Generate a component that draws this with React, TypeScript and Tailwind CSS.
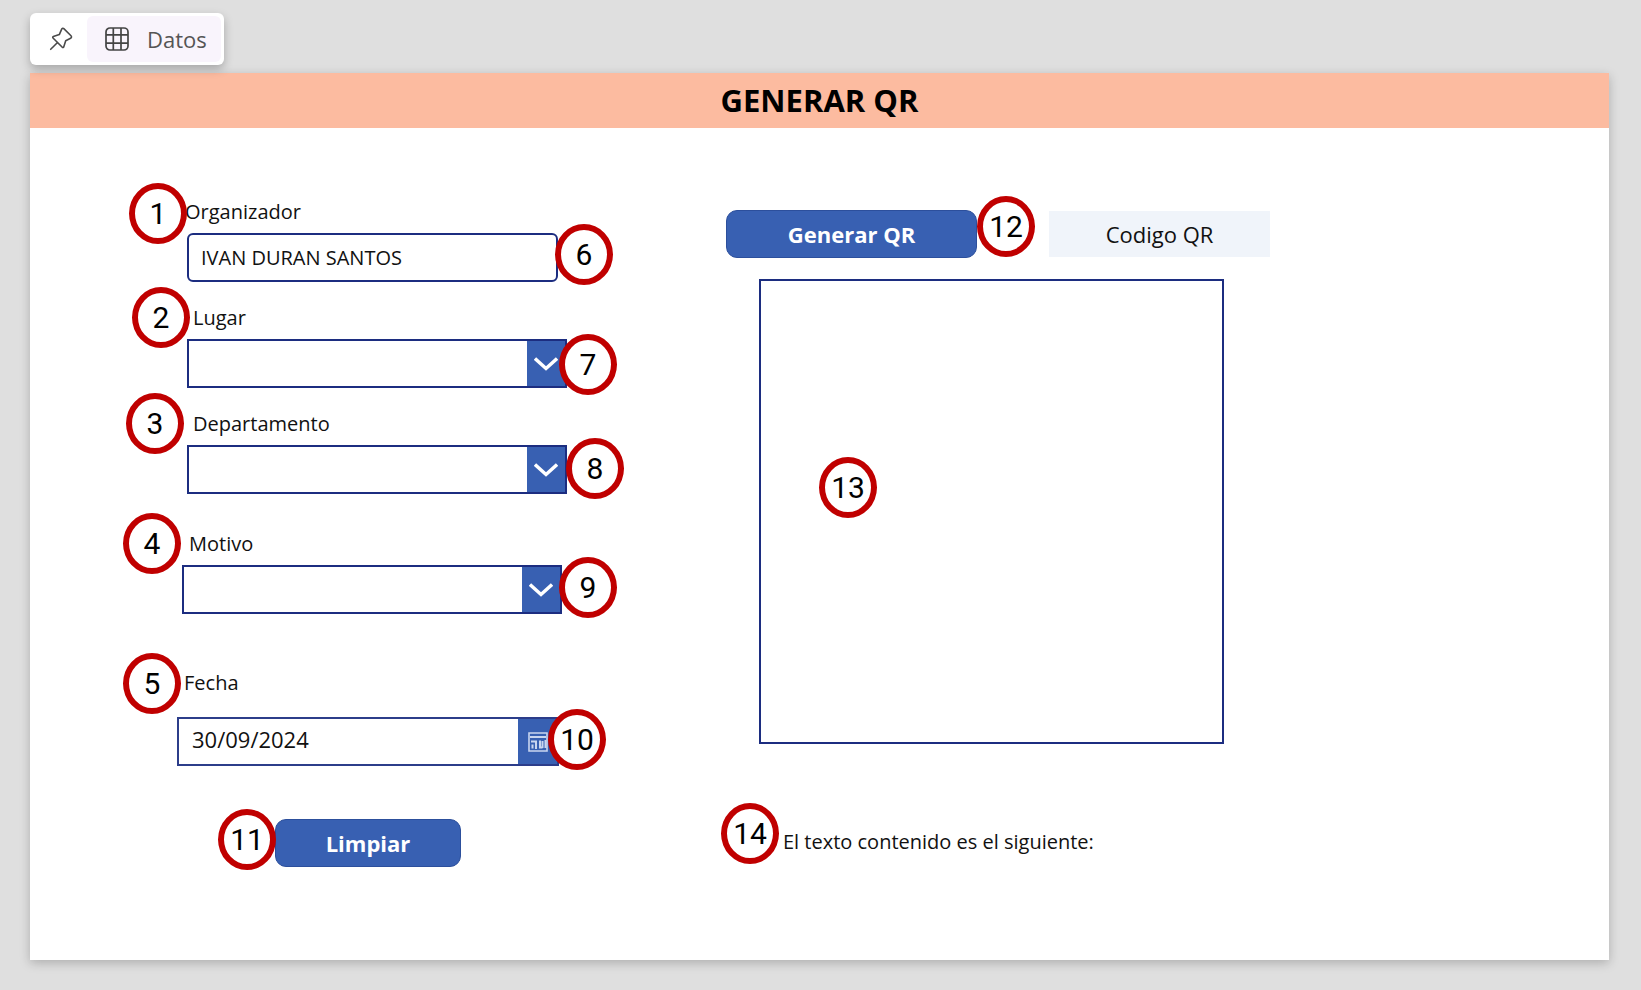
import { useState, type ReactNode } from "react";

function Badge({ n, className }: { n: number; className: string }) {
  return (
    <span
      className={`absolute z-10 flex h-[61px] w-[58px] items-center justify-center rounded-[50%] border-6 border-[#c00000] bg-white pt-px font-[Roboto,sans-serif] text-[30px] leading-none text-black ${className}`}
    >
      {n}
    </span>
  );
}

function PinIcon() {
  return (
    <svg viewBox="0 0 24 24" className="h-6 w-6" fill="none" stroke="#4a4a4a" strokeWidth="1.6" strokeLinejoin="round" strokeLinecap="round" aria-hidden="true">
      <path d="M14.8 1.6 22 8.7c.8.8.6 2.1-.4 2.600l-4.900 2.500-2 6.100c-.2.600-1 .8-1.400.300L4 11c-.5-.5-.3-1.200.3-1.400l6-2L12.700 2.100c.4-.9 1.500-1.100 2.100-.5Z" />
      <path d="m8.300 15.700-6.600 6.600" />
    </svg>
  );
}

function GridIcon() {
  return (
    <svg viewBox="0 0 24 24" className="h-6 w-6" fill="none" stroke="#444" strokeWidth="1.7" aria-hidden="true">
      <rect x="1" y="1" width="22" height="22" rx="4" />
      <path d="M8.300 1v22M16 1v22M1 7.800h22M1 16.200h22" />
    </svg>
  );
}

function CalendarIcon() {
  return (
    <svg viewBox="0 0 20 20" className="h-5 w-5" fill="none" stroke="#c9d5ef" aria-hidden="true">
      <path strokeWidth="1.6" d="M1 1h18v18H1z" />
      <path strokeWidth="2" d="M2 5h16M3 9.500h5V17M4.500 16.500v-4M12 8.500v7h2.500M14.500 9v7M17.500 8v8" />
    </svg>
  );
}

function Field({ id, label, labelClass, labelBadge, controlBadge, className, children }: {
  id: string;
  label: string;
  labelClass: string;
  labelBadge: ReactNode;
  controlBadge: ReactNode;
  className: string;
  children: ReactNode;
}) {
  return (
    <div className={`relative flex flex-col ${className}`}>
      <label htmlFor={id} className={`leading-7 ${labelClass}`}>{label}</label>
      {children}
      {labelBadge}
      {controlBadge}
    </div>
  );
}

function Dropdown({ id }: { id: string }) {
  return (
    <div className="relative h-[49px] w-[380px]">
      <select id={id} className="h-full w-full appearance-none border-2 border-[#1c2d80] bg-white pl-3 pr-12 outline-none">
        <option value=""></option>
      </select>
      <span className="pointer-events-none absolute inset-y-0 right-0 flex w-10 items-center justify-center border-2 border-l-0 border-[#1c2d80] bg-[#3860b2]">
        <svg viewBox="0 0 24 14" className="h-[14px] w-6" fill="none" stroke="#fff" strokeWidth="3.4" aria-hidden="true">
          <path d="m1 1.500 11 10 11-10" />
        </svg>
      </span>
    </div>
  );
}

export default function App() {
  const [name, setName] = useState("IVAN DURAN SANTOS");
  const [date, setDate] = useState("30/09/2024");

  return (
    <div className="min-h-screen bg-[#dfdfdf] pt-[13px] pr-8 pb-[30px] pl-[30px] font-['Open_Sans',sans-serif] text-[20px] text-[#111]">
      <nav className="relative z-10 flex h-[52px] w-[194px] items-center rounded-md bg-white p-[3px] shadow-[0_4px_10px_rgba(0,0,0,0.25)]">
        <button type="button" aria-label="Fijar" className="flex h-full w-[54px] items-center justify-center pl-px">
          <PinIcon />
        </button>
        <button type="button" className="flex h-full flex-1 items-center gap-[18px] rounded-md bg-[#f9f4fc] pl-[18px] text-[22px] text-[#555]">
          <GridIcon />
          Datos
        </button>
      </nav>

      <main className="mt-2 min-h-[887px] bg-white shadow-[0_3px_10px_rgba(0,0,0,0.22)]">
        <header className="flex h-[55px] items-center justify-center bg-[#fcbba0]">
          <h1 className="text-[31px] font-bold text-black">GENERAR QR</h1>
        </header>

        <div className="flex">
          <form className="flex w-[696px] shrink-0 flex-col pt-[70px] pl-[147px]" onSubmit={(e) => e.preventDefault()}>
            <Field
              id="organizador" label="Organizador" labelClass="mb-[7px]" className="ml-2 w-[373px]"
              labelBadge={<Badge n={1} className="-left-[56px] -top-[15px]" />}
              controlBadge={<Badge n={6} className="left-[370px] top-[26px]" />}
            >
              <input id="organizador" value={name} onChange={(e) => setName(e.target.value)} className="ml-[2px] h-[49px] rounded-md border-2 border-[#1c2d80] bg-white px-3 outline-none" />
            </Field>
            <Field
              id="lugar" label="Lugar" labelClass="mb-[7px] pl-[6px]" className="mt-[22px] ml-[10px] w-[380px]"
              labelBadge={<Badge n={2} className="-left-[55px] -top-[17px]" />}
              controlBadge={<Badge n={7} className="left-[372px] top-[30px]" />}
            >
              <Dropdown id="lugar" />
            </Field>
            <Field
              id="departamento" label="Departamento" labelClass="mb-[7px] pl-[6px]" className="mt-[22px] ml-[10px] w-[380px]"
              labelBadge={<Badge n={3} className="-left-[61px] -top-[17px]" />}
              controlBadge={<Badge n={8} className="left-[379px] top-[28px]" />}
            >
              <Dropdown id="departamento" />
            </Field>
            <Field
              id="motivo" label="Motivo" labelClass="mb-[7px] pl-[7px]" className="mt-[36px] ml-[5px] w-[380px]"
              labelBadge={<Badge n={4} className="-left-[59px] -top-[17px]" />}
              controlBadge={<Badge n={9} className="left-[377px] top-[27px]" />}
            >
              <Dropdown id="motivo" />
            </Field>
            <Field
              id="fecha" label="Fecha" labelClass="mb-[20px] pl-[7px]" className="mt-[55px] w-[382px]"
              labelBadge={<Badge n={5} className="-left-[54px] -top-[16px]" />}
              controlBadge={<Badge n={10} className="left-[371px] top-[40px]" />}
            >
              <div className="flex h-[49px] border-2 border-[#2c3d8a] bg-white">
                <input id="fecha" value={date} onChange={(e) => setDate(e.target.value)} className="min-w-0 flex-1 pb-1 pl-[13px] text-[22px] outline-none" />
                <button type="button" aria-label="Abrir calendario" className="flex w-[39px] items-center justify-center bg-[#3860b2]">
                  <CalendarIcon />
                </button>
              </div>
            </Field>
            <div className="relative mt-[53px] ml-[98px] w-[186px]">
              <button type="button" onClick={() => setName("")} className="h-12 w-full rounded-[11px] border border-[#2c4f9c] bg-[#3860b2] text-[22px] font-bold text-white">
                Limpiar
              </button>
              <Badge n={11} className="-left-[57px] -top-[10px]" />
            </div>
          </form>

          <section className="flex flex-1 flex-col pt-[82px]">
            <div className="flex items-center gap-[72px]">
              <div className="relative w-[251px]">
                <button type="button" className="h-12 w-full rounded-[11px] border border-[#2c4f9c] bg-[#3860b2] text-[22px] font-bold text-white">
                  Generar QR
                </button>
                <Badge n={12} className="left-[251px] -top-[14px]" />
              </div>
              <button type="button" className="h-[46px] w-[221px] bg-[#f0f4fa] text-[22px]">Codigo QR</button>
            </div>
            <div className="relative mt-[21px] ml-[33px] h-[465px] w-[465px] border-2 border-[#1c2d80]">
              <Badge n={13} className="left-[58px] top-[176px]" />
            </div>
            <p className="relative mt-[84px] ml-[57px] leading-7">
              El texto contenido es el siguiente:
              <Badge n={14} className="-left-[62px] -top-[25px]" />
            </p>
          </section>
        </div>
      </main>
    </div>
  );
}
